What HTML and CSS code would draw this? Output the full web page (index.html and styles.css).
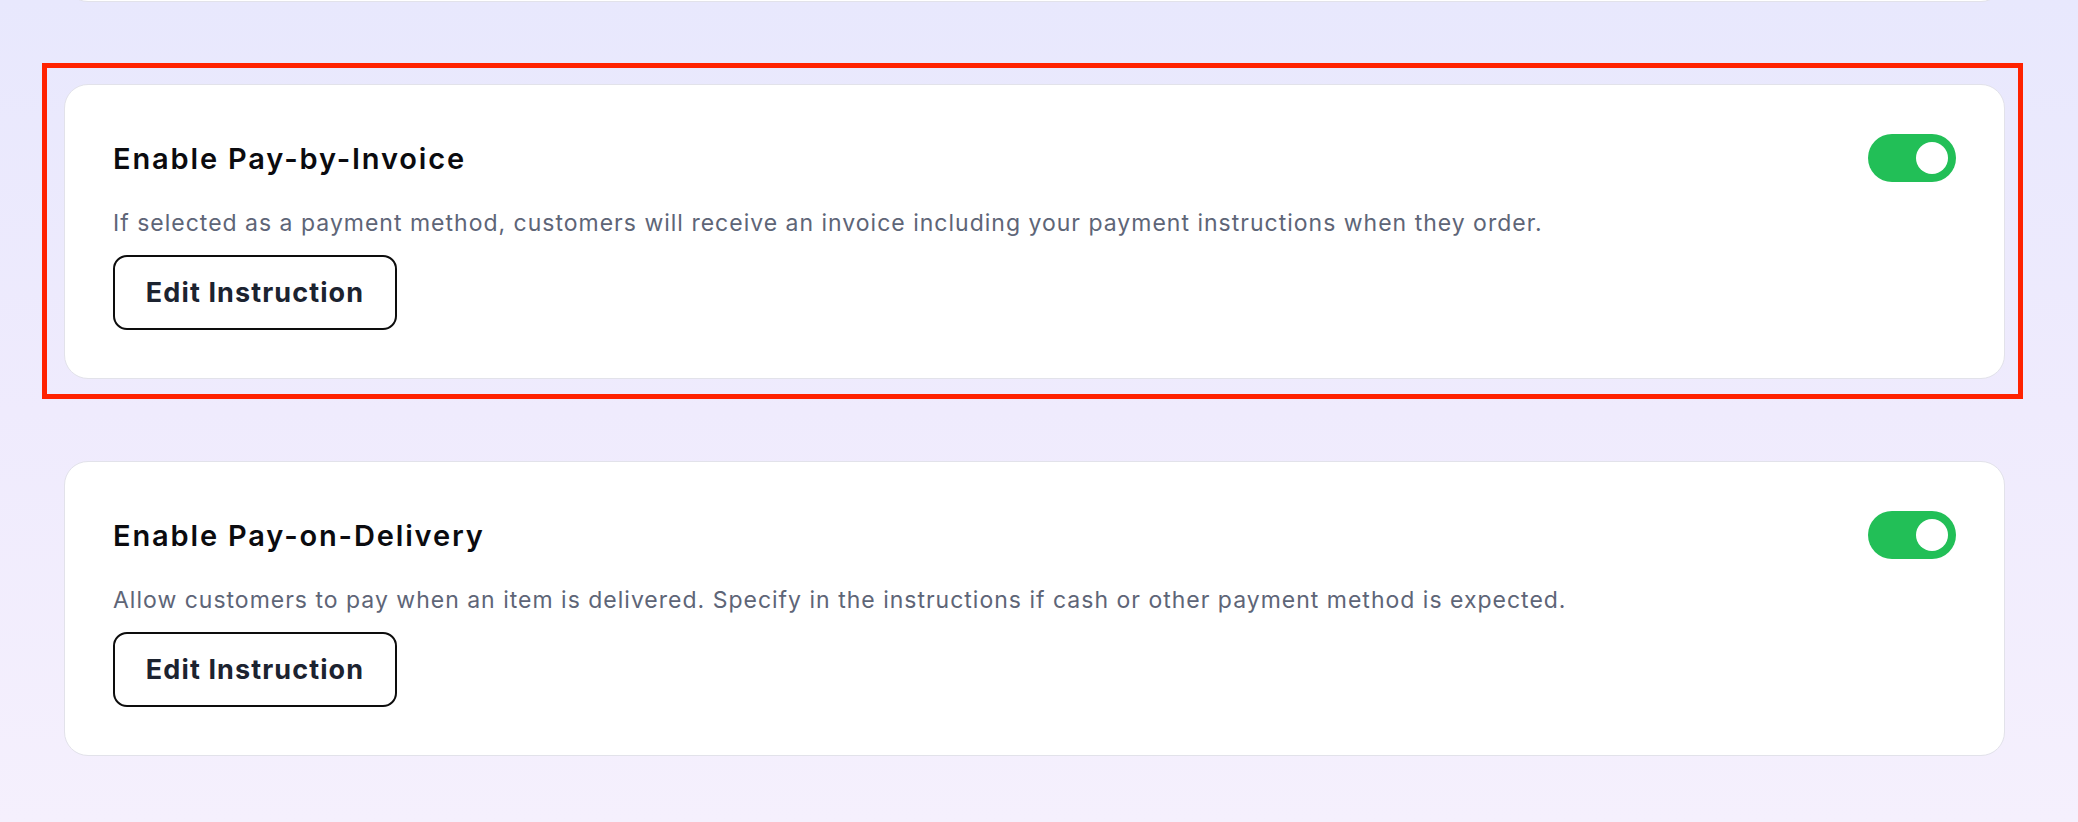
FILE: index.html
```html
<!DOCTYPE html>
<html lang="en">
<head>
<meta charset="utf-8">
<title>Payment settings</title>
<link rel="stylesheet" href="styles.css">
</head>
<body>
<main class="page">
  <section class="card card-stub" aria-hidden="true"></section>

  <div class="highlight-wrap">
    <section class="card">
      <div class="card-head">
        <h2 class="card-title">Enable Pay-by-Invoice</h2>
        <span class="toggle is-on" role="switch" aria-checked="true"><span class="knob"></span></span>
      </div>
      <p class="card-desc">If selected as a payment method, customers will receive an invoice including your payment instructions when they order.</p>
      <button class="btn-outline" type="button">Edit Instruction</button>
    </section>
    <div class="highlight-box"></div>
  </div>

  <section class="card">
    <div class="card-head">
      <h2 class="card-title">Enable Pay-on-Delivery</h2>
      <span class="toggle is-on" role="switch" aria-checked="true"><span class="knob"></span></span>
    </div>
    <p class="card-desc">Allow customers to pay when an item is delivered. Specify in the instructions if cash or other payment method is expected.</p>
    <button class="btn-outline" type="button">Edit Instruction</button>
  </section>
</main>
</body>
</html>
```

FILE: styles.css
```css
html, body {
  margin: 0;
  padding: 0;
}

body {
  min-height: 822px;
  background: linear-gradient(180deg, #e8e8fd 0%, #efebfd 50%, #f5f0fd 100%);
  font-family: "Inter", "Open Sans", sans-serif;
  overflow: hidden;
}

.page {
  display: flex;
  flex-direction: column;
  gap: 82px;
  padding: 0 73px 0 64px;
}

.card {
  background: #ffffff;
  border: 1px solid #e2e2ea;
  border-radius: 24px;
  padding: 49px 48px 48px;
}

.card-stub {
  height: 100px;
  margin-top: -100px;
  padding: 0;
}

.highlight-wrap {
  position: relative;
}

.highlight-box {
  position: absolute;
  left: -22px;
  right: -18px;
  top: -21px;
  bottom: -20px;
  border: 5px solid #ff2200;
  pointer-events: none;
}

.card-head {
  display: flex;
  align-items: center;
  justify-content: space-between;
  height: 48px;
}

.card-title {
  margin: 0;
  font-size: 29px;
  font-weight: 600;
  letter-spacing: 1.85px;
  color: #0b0b0f;
}

.card-desc {
  margin: 25px 0 16px;
  font-size: 23px;
  line-height: 32px;
  letter-spacing: 1px;
  color: #5e6577;
}

.btn-outline {
  box-sizing: border-box;
  width: 284px;
  height: 75px;
  border: 2px solid #0d0d0d;
  border-radius: 14px;
  background: #ffffff;
  font-family: inherit;
  font-size: 27px;
  font-weight: 700;
  letter-spacing: 1.1px;
  color: #1c2330;
  padding: 0;
}

.toggle {
  box-sizing: border-box;
  width: 88px;
  height: 48px;
  border-radius: 24px;
  background: #22bf57;
  display: flex;
  align-items: center;
  justify-content: flex-end;
  padding: 0 8px;
}

.knob {
  width: 32px;
  height: 32px;
  border-radius: 50%;
  background: #ffffff;
}
```
